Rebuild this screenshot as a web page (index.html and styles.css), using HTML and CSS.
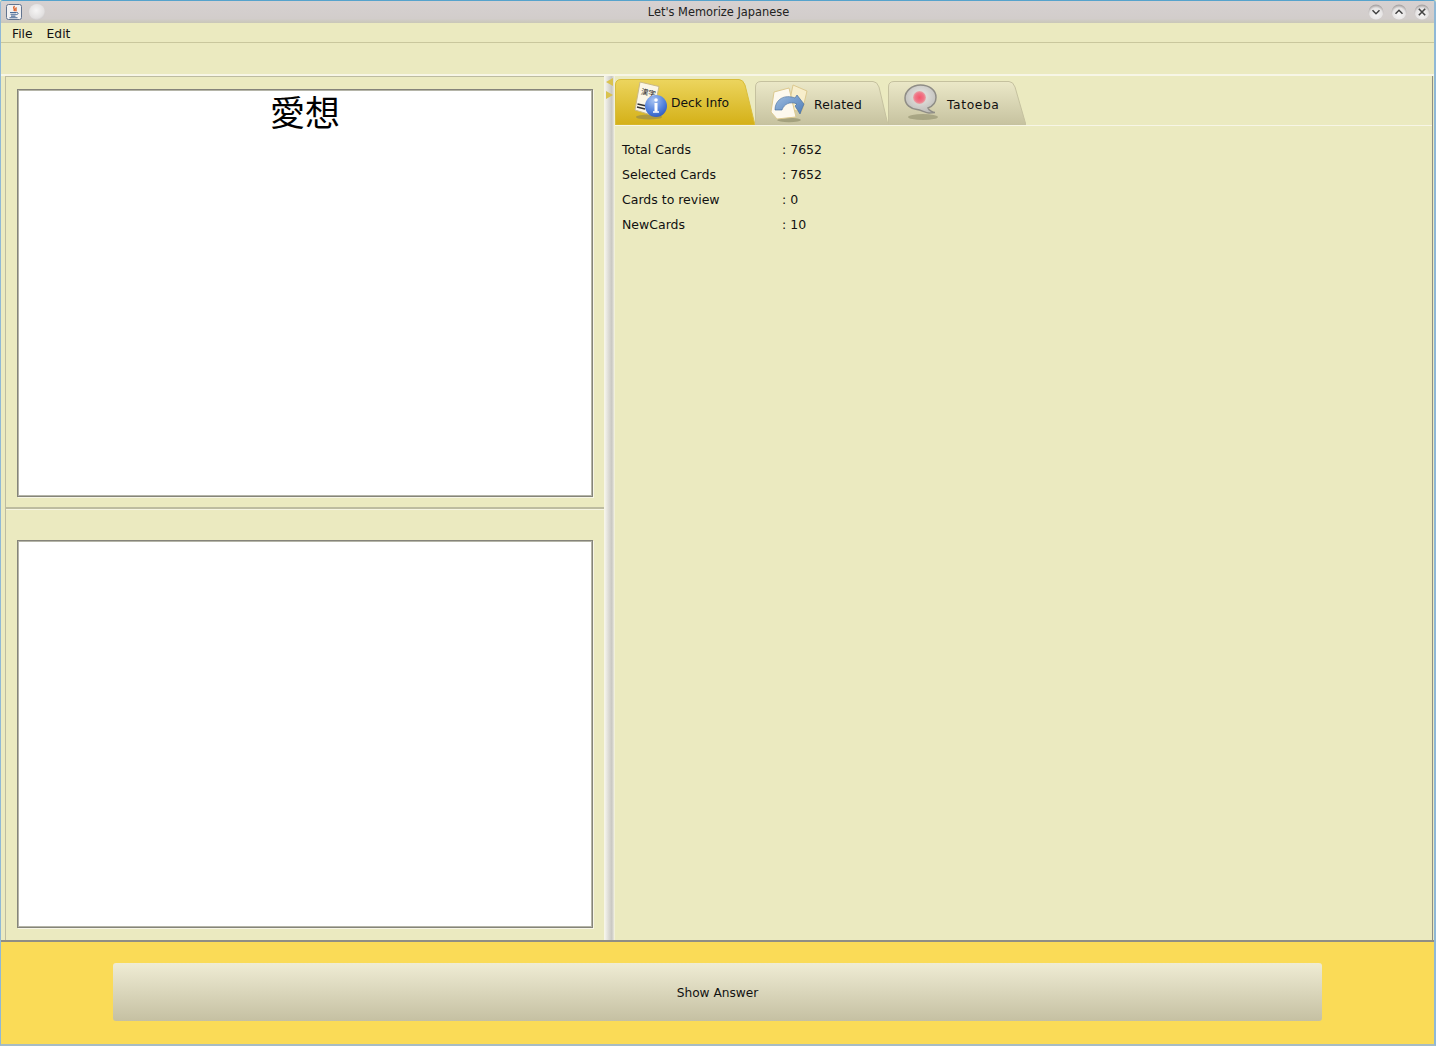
FILE: index.html
```html
<!DOCTYPE html>
<html lang="en">
<head>
<meta charset="utf-8">
<title>Let's Memorize Japanese</title>
<link rel="stylesheet" href="styles.css">
</head>
<body>
<div class="window">
  <header class="titlebar">
    <div class="title-left">
      <svg class="java-icon" width="16" height="16" viewBox="0 0 16 16">
        <rect x="0.5" y="0.5" width="15" height="15" rx="2" fill="#f2f1f2" stroke="#62748f"/>
        <path d="M8.500 2c-2.500 2.200 1.300 2.800-.6 5M10.500 3.500c-2 1.400.6 2-.9 3.700" fill="none" stroke="#dd5a1e" stroke-width="1.400"/>
        <path d="M4 8.500h6.500M4.500 10.300h5.500M5 12.100h4.500M3.500 13.700h8" stroke="#4a6a96" stroke-width="1.100"/>
        <path d="M10.500 8.500c2.200-.4 2.200 2-.3 2.200" fill="none" stroke="#4a6a96"/>
      </svg>
      <span class="round-btn"></span>
    </div>
    <div class="title-text">Let's Memorize Japanese</div>
    <div class="title-right">
      <svg class="win-btn" width="16" height="16" viewBox="0 0 16 16"><defs><radialGradient id="wb" cx=".5" cy=".65" r=".6"><stop offset="0" stop-color="#f6f5f5"/><stop offset=".7" stop-color="#e6e4e4"/><stop offset="1" stop-color="#a9a5a5"/></radialGradient></defs><circle cx="8" cy="8" r="7.500" fill="url(#wb)"/><path d="M4.500 6.300 8 9.800l3.500-3.500" fill="none" stroke="#444" stroke-width="1.500"/></svg>
      <svg class="win-btn" width="16" height="16" viewBox="0 0 16 16"><circle cx="8" cy="8" r="7.500" fill="url(#wb)"/><path d="M4.500 9.700 8 6.200l3.500 3.500" fill="none" stroke="#444" stroke-width="1.500"/></svg>
      <svg class="win-btn" width="16" height="16" viewBox="0 0 16 16"><circle cx="8" cy="8" r="7.500" fill="url(#wb)"/><path d="M4.800 4.800l6.400 6.400M11.200 4.800l-6.400 6.400" fill="none" stroke="#444" stroke-width="1.600"/></svg>
    </div>
  </header>
  <nav class="menubar"><span class="menu-item">File</span><span class="menu-item">Edit</span></nav>
  <div class="toolbar"></div>
  <main class="workspace">
    <section class="left-pane">
      <div class="card-area card-area-top"><div class="card card-top"><div class="kanji">愛想</div></div></div>
      <div class="card-area card-area-bottom"><div class="card card-bottom"></div></div>
    </section>
    <div class="splitter">
      <span class="arrow arrow-left"></span>
      <span class="arrow arrow-right"></span>
    </div>
    <section class="right-pane">
      <div class="tabs">
        <div class="tab tab-active">
          <svg class="tab-shape" viewBox="0 0 140 46" preserveAspectRatio="none"><defs><linearGradient id="ta" x1="0" y1="0" x2="0" y2="1"><stop offset="0" stop-color="#ecd55e"/><stop offset="1" stop-color="#d4b017"/></linearGradient></defs><path d="M0.500 46V6Q0.500 0.500 6 0.500H124Q128 0.500 130 6L140 46Z" fill="url(#ta)" stroke="#d8bd3c"/></svg>
          <svg class="tab-icon icon-deck" width="38" height="40" viewBox="0 0 38 40">
            <defs><radialGradient id="info" cx=".4" cy=".25" r=".85"><stop offset="0" stop-color="#a8c4f2"/><stop offset=".6" stop-color="#4f7fdc"/><stop offset="1" stop-color="#2a54b8"/></radialGradient></defs>
            <ellipse cx="15" cy="36" rx="13" ry="2.500" fill="#8d8350" opacity=".6"/>
            <path d="M6 1l19 4.500-6 29L1 29z" fill="#fbf6e6" stroke="#c9b987"/>
            <text x="6.500" y="13" class="mini-kanji" transform="rotate(12 6.500 13)">漢字</text>
            <path d="M3.500 23l9 2M3 26l8 2" stroke="#333" stroke-width="1.500"/>
            <circle cx="22" cy="25" r="11" fill="url(#info)"/>
            <circle cx="22" cy="19" r="1.800" fill="#fff"/><path d="M22 22v8.500" stroke="#fff" stroke-width="3"/><path d="M19 31h6" stroke="#fff" stroke-width="1.500"/>
          </svg>
          <span class="tab-label label-deck">Deck Info</span>
        </div>
        <div class="tab tab-related">
          <svg class="tab-shape" viewBox="0 0 133 44" preserveAspectRatio="none"><defs><linearGradient id="ti" x1="0" y1="0" x2="0" y2="1"><stop offset="0" stop-color="#ebe8c8"/><stop offset="1" stop-color="#c6c29f"/></linearGradient></defs><path d="M0.500 44V6Q0.500 0.500 6 0.500H118Q122 0.500 124 6L133 44Z" fill="url(#ti)" stroke="#c5c19f"/></svg>
          <svg class="tab-icon icon-related" width="40" height="40" viewBox="0 0 40 40">
            <defs><linearGradient id="arw" x1="0" y1="0" x2="1" y2="1"><stop offset="0" stop-color="#9fbde0"/><stop offset="1" stop-color="#4d7db8"/></linearGradient></defs>
            <ellipse cx="19" cy="37" rx="12" ry="2.200" fill="#8b8866" opacity=".6"/>
            <path d="M23 2l14 6-5 21-14-3z" fill="#f7eecb" stroke="#dcc98f"/>
            <path d="M4 9l15-4 7 29-19 2L1 29z" fill="#fdf9ee" stroke="#dcc98f"/>
            <path d="M5 27C5 16 15 11 25 15l2-3 7 9-4 10-5-8 2-2c-7-3-13 0-15 6z" fill="url(#arw)" stroke="#3e6799" stroke-width=".6"/>
          </svg>
          <span class="tab-label label-related">Related</span>
        </div>
        <div class="tab tab-tatoeba">
          <svg class="tab-shape" viewBox="0 0 138 44" preserveAspectRatio="none"><path d="M0.500 44V6Q0.500 0.500 6 0.500H121Q125 0.500 127 6L138 44Z" fill="url(#ti)" stroke="#c5c19f"/></svg>
          <svg class="tab-icon icon-tatoeba" width="38" height="38" viewBox="0 0 38 38">
            <defs><radialGradient id="bub" cx=".5" cy=".4" r=".6"><stop offset="0" stop-color="#ecebe8"/><stop offset="1" stop-color="#bdbcb8"/></radialGradient><radialGradient id="dot"><stop offset="0" stop-color="#f5566b"/><stop offset=".7" stop-color="#f0788a"/><stop offset="1" stop-color="#e6a9a8"/></radialGradient></defs>
            <ellipse cx="20" cy="33" rx="15" ry="3" fill="#8b8866" opacity=".55"/>
            <path d="M17.500 1C9 1 2 7 2 14c0 7 6 11 12 11.500 4 .5 9 3.500 12 3.500l6-.5c-2 0-6-2-7-4.500 5-2 8-5.500 8-10.500C33 6 26 1 17.500 1z" fill="url(#bub)" stroke="#8f8d86" stroke-width="1.500"/>
            <circle cx="16.500" cy="13.500" r="6.500" fill="url(#dot)"/>
          </svg>
          <span class="tab-label label-tatoeba">Tatoeba</span>
        </div>
      </div>
      <div class="info">
        <div class="info-row"><span class="info-key">Total Cards</span><span>: 7652</span></div>
        <div class="info-row"><span class="info-key">Selected Cards</span><span>: 7652</span></div>
        <div class="info-row"><span class="info-key">Cards to review</span><span>: 0</span></div>
        <div class="info-row"><span class="info-key">NewCards</span><span>: 10</span></div>
      </div>
    </section>
  </main>
  <footer class="footer"><button class="show-answer" type="button">Show Answer</button></footer>
</div>
</body>
</html>
```
FILE: styles.css
```css
html, body { margin: 0; padding: 0; }
body { width: 1436px; height: 1046px; overflow: hidden; background: #ebeac0; font-family: "DejaVu Sans", sans-serif; font-size: 12.500px; color: #111; }
.window { box-sizing: border-box; width: 1436px; height: 1046px; display: flex; flex-direction: column; border: 1px solid #8fb8d6; border-bottom: 2px solid #a7bcc4; border-right-width: 2px; border-top-color: #56a3cc; border-radius: 3px 3px 0 0; overflow: hidden; }
.titlebar { flex: none; height: 22px; display: flex; align-items: center; justify-content: space-between; position: relative; background: linear-gradient(#d6d1d1, #d2cdcb 80%, #c9c7b8); }
.title-left { display: flex; align-items: center; gap: 7px; padding-left: 5px; }
.java-icon { display: block; }
.round-btn { width: 16px; height: 16px; border-radius: 50%; background: radial-gradient(circle at 45% 40%, #f6f5f5, #e2e0e0 60%, #a9a5a5); box-sizing: border-box; }
.title-text { position: absolute; left: 0; right: 0; padding-left: 2px; text-align: center; font-size: 11.400px; color: #222; line-height: 22px; }
.title-right { display: flex; gap: 7px; padding-right: 4px; }
.win-btn { display: block; }
.menubar { flex: none; box-sizing: border-box; height: 20px; padding-top: 3px; display: flex; align-items: center; gap: 14px; padding-left: 11px; background: #ebeac0; border-bottom: 1px solid #c9c79d; font-size: 12.300px; }
.toolbar { flex: none; height: 31px; background: #ebeac0; border-bottom: 2px solid #f7f6e6; }
.workspace { flex: none; height: 864px; display: flex; padding-left: 4px; padding-right: 1px; border-bottom: 2px solid #8f8e84; background: #ebeac0; }
.left-pane { box-sizing: border-box; width: 599px; flex: none; display: flex; flex-direction: column; border-left: 1px solid #bdbca0; border-top: 1px solid #bdbca0; }
.card-area { box-sizing: border-box; display: flex; padding-left: 11px; padding-right: 11px; }
.card-area-top { height: 432px; padding-top: 12px; border-bottom: 2px solid #bdbca0; }
.card-area-bottom { flex: 1; padding-top: 30px; padding-bottom: 12px; border-top: 1px solid #f6f5e2; }
.card { box-sizing: border-box; flex: 1; background: #fff; border: 1px solid #85847a; box-shadow: inset 0 0 0 1px #b5b5a8, 1px 1px 0 #f7f6e6; }
.card-top { height: 408px; }
.kanji { text-align: center; font-family: "Noto Sans CJK JP", sans-serif; font-weight: 400; font-size: 35px; line-height: 42px; color: #000; }
.splitter { flex: none; width: 10px; display: flex; flex-direction: column; align-items: center; gap: 5px; padding-top: 2px; box-sizing: border-box; border-left: 1px solid #f7f6e6; background: linear-gradient(90deg, #f4f3ec, #c9c8c2 75%, #e7e6dc); }
.arrow { flex: none; width: 0; height: 0; border-top: 4px solid transparent; border-bottom: 4px solid transparent; }
.arrow-left { border-right: 7px solid #d9c24e; }
.arrow-right { border-left: 7px solid #d9c24e; }
.right-pane { flex: 1; min-width: 0; background: #ebeac0; border-left: 1px solid #f2f1d8; border-right: 1px solid #8f8e84; }
.tabs { height: 50px; box-sizing: border-box; display: flex; align-items: flex-end; border-bottom: 1px solid #f7f6e6; }
.tab { position: relative; flex: none; display: block; }
.tab-shape { position: absolute; left: 0; top: 0; width: 100%; height: 100%; display: block; }
.tab-icon { position: absolute; display: block; }
.tab-label { position: absolute; white-space: nowrap; line-height: 16px; font-size: 12.300px; }
.tab-active { width: 140px; height: 46px; }
.tab-related { width: 133px; height: 44px; }
.tab-tatoeba { width: 138px; height: 44px; }
.icon-deck { left: 19px; top: 2px; }
.label-deck { left: 56px; top: 16px; }
.icon-related { left: 15px; top: 2px; }
.label-related { left: 59px; top: 16px; letter-spacing: .2px; }
.icon-tatoeba { left: 15px; top: 3px; }
.label-tatoeba { left: 59px; top: 16px; letter-spacing: .6px; }
.mini-kanji { font-family: "Noto Sans CJK JP", sans-serif; font-size: 7.500px; fill: #222; }
.info { padding: 11px 0 0 7px; }
.info-row { display: flex; height: 25px; align-items: center; }
.info-key { width: 160px; flex: none; }
.footer { flex: 1; display: flex; justify-content: center; align-items: flex-start; padding-top: 21px; background: #fadb57; }
.show-answer { width: 1209px; height: 58px; border: 0; border-radius: 3px; background: linear-gradient(#efecd4, #c5c0a2); font-family: "DejaVu Sans", sans-serif; font-size: 12.200px; color: #111; padding: 2px 0 0; }
```
